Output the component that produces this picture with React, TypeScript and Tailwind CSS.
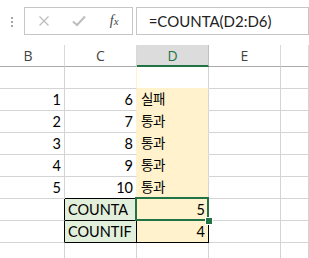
import React from "react";

const YEL = "#FFF2CC";
const GRN = "#E2EFDA";

type C = {
  t?: string;
  right?: boolean;
  bg?: string;
  br?: string;
  bb?: string;
  ko?: boolean;
};

const grid = "#D4D4D4";

function Cell({ t, right, bg, br, bb, ko }: C) {
  return (
    <div
      className={`h-[22px] border-r border-b flex items-end px-[3px] pb-[3px] whitespace-nowrap leading-[15px] text-black ${ko ? "text-[13.5px] tracking-[-0.3px] pl-[4px]" : "text-[14.5px]"} ${right ? "justify-end" : "justify-start"}`}
      style={{ backgroundColor: bg || "#fff", borderRightColor: br || grid, borderBottomColor: bb || grid }}
    >
      {t}
    </div>
  );
}

export default function App() {
  const blk = "#000";
  const rows: C[][] = [
    [{}, { br: YEL }, { bb: YEL }, {}, {}],
    [{ t: "1", right: true }, { t: "6", right: true, br: YEL }, { t: "실패", bg: YEL, bb: YEL, ko: true }, {}, {}],
    [{ t: "2", right: true }, { t: "7", right: true, br: YEL }, { t: "통과", bg: YEL, bb: YEL, ko: true }, {}, {}],
    [{ t: "3", right: true }, { t: "8", right: true, br: YEL }, { t: "통과", bg: YEL, bb: YEL, ko: true }, {}, {}],
    [{ t: "4", right: true }, { t: "9", right: true, br: YEL }, { t: "통과", bg: YEL, bb: YEL, ko: true }, {}, {}],
    [{ t: "5", right: true }, { t: "10", right: true, br: YEL, bb: blk }, { t: "통과", bg: YEL, bb: blk, ko: true }, {}, {}],
    [{ br: blk }, { t: "COUNTA", bg: GRN, br: blk, bb: blk }, { t: "5", right: true, bg: YEL, br: blk, bb: blk }, {}, {}],
    [{ br: blk }, { t: "COUNTIF", bg: GRN, br: blk, bb: blk }, { t: "4", right: true, bg: YEL, br: blk, bb: blk }, {}, {}],
    [{}, {}, {}, {}, {}],
  ];

  return (
    <div
      className="w-[309px] h-[258px] overflow-hidden bg-white relative"
      style={{ fontFamily: "Lato, 'Noto Sans CJK KR', sans-serif" }}
    >
      {/* formula bar */}
      <div className="h-[45px] flex items-start pt-[7px]">
        <div className="w-[24px] flex flex-col items-center gap-[2px] pt-[10px]">
          <div className="w-[2px] h-[2px] bg-[#A6A6A6]" />
          <div className="w-[2px] h-[2px] bg-[#A6A6A6]" />
          <div className="w-[2px] h-[2px] bg-[#A6A6A6]" />
        </div>
        <div className="w-[110px] h-[28px] border border-[#C6C6C6] flex items-center">
          <svg width="12" height="12" viewBox="0 0 12 12" className="ml-[13px]">
            <path d="M1.5 1.5L10.5 10.5M10.5 1.5L1.5 10.5" stroke="#BDBDBD" strokeWidth="1.3" />
          </svg>
          <svg width="14" height="12" viewBox="0 0 14 12" className="ml-[22px]">
            <path d="M1 6.5L5 10L13 1.5" stroke="#BDBDBD" strokeWidth="2" fill="none" />
          </svg>
          <span
            className="ml-[24px] text-[#444] italic text-[14px] leading-none"
            style={{ fontFamily: "'Liberation Serif', serif" }}
          >
            f<span className="text-[11px]">x</span>
          </span>
        </div>
        <div className="ml-[3px] w-[175px] h-[28px] border border-[#C6C6C6] flex items-center pl-[12px] text-[15px] text-[#222]">
          =COUNTA(D2:D6)
        </div>
      </div>

      {/* column headers */}
      <div className="grid grid-cols-[65px_72px_72px_72px_28px] text-[14px] text-[#444]" style={{ fontFamily: "'Open Sans', sans-serif" }}>
        {["B", "C", "D", "E", ""].map((h) => (
          <div
            key={h}
            className={`h-[22px] flex items-center justify-center border-r ${h === "B" ? "pr-[8px]" : ""} ${h === "D" ? "bg-[#DCDCDC] text-[#217346] border-b-2 border-b-[#217346] pt-[1px]" : "border-b border-b-[#ABABAB]"}`}
            style={{ borderRightColor: h === "D" ? "#C0C0C0" : "#D9D9D9" }}
          >
            {h}
          </div>
        ))}
      </div>

      {/* cells */}
      <div className="grid grid-cols-[65px_72px_72px_72px_28px]">
        {rows.map((r, i) =>
          r.map((c, j) => <Cell key={`${i}-${j}`} {...c} />)
        )}
      </div>

      {/* selection on D7 */}
      <div className="absolute left-[135px] top-[197px] w-[74px] h-[24px] border-2 border-[#217346]" />
      <div className="absolute left-[205px] top-[217px] w-[8px] h-[8px] bg-[#217346] border border-white" />
    </div>
  );
}
